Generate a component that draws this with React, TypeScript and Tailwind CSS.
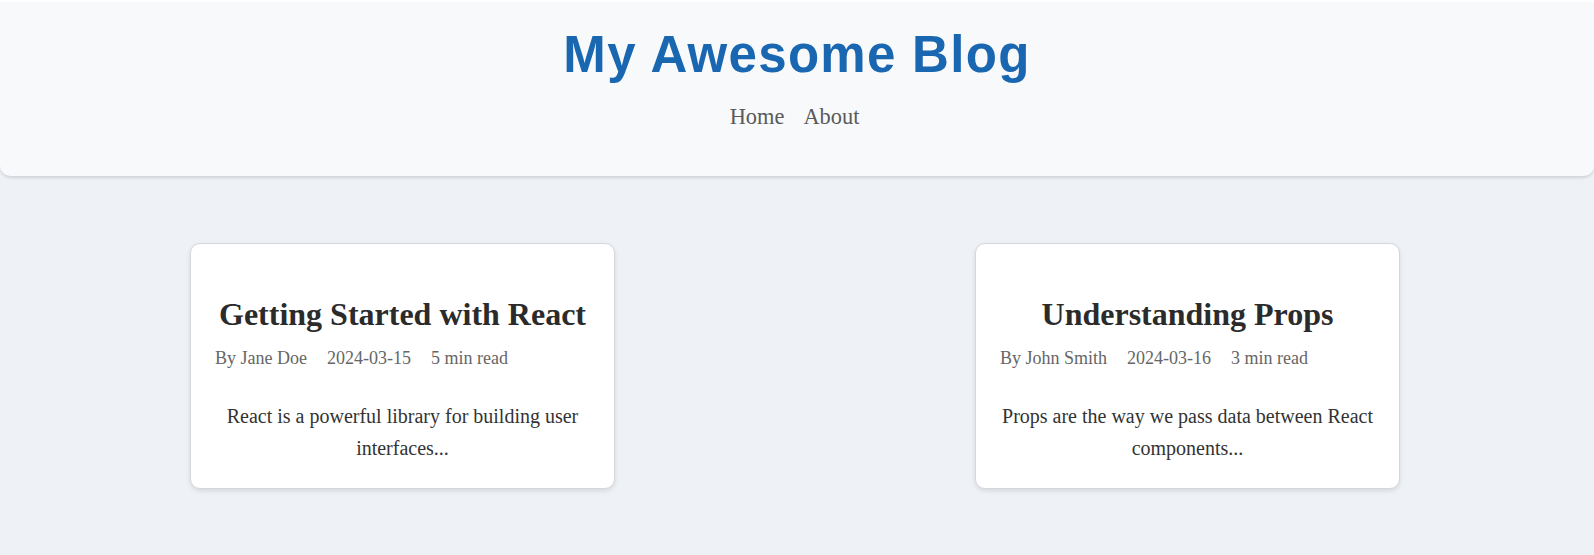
const posts = [
  {
    title: "Getting Started with React",
    author: "Jane Doe",
    date: "2024-03-15",
    read: "5 min read",
    excerpt: "React is a powerful library for building user interfaces...",
  },
  {
    title: "Understanding Props",
    author: "John Smith",
    date: "2024-03-16",
    read: "3 min read",
    excerpt: "Props are the way we pass data between React components...",
  },
];

function PostCard({ post }: { post: (typeof posts)[number] }) {
  return (
    <article className="w-[425px] bg-white border border-[#d4d7dc] rounded-[10px] shadow-[0_2px_5px_rgba(0,0,0,0.1)] px-6 pt-[52px] pb-6">
      <h2 className="text-center text-[32px] leading-[1.15] font-bold text-[#2b2b2b]">
        {post.title}
      </h2>
      <div className="mt-[15px] flex gap-5 text-[18px] leading-[1.15] text-[#666]">
        <span>By {post.author}</span>
        <span>{post.date}</span>
        <span>{post.read}</span>
      </div>
      <p className="mt-[31px] text-center text-[20px] leading-[32px] text-[#333]">
        {post.excerpt}
      </p>
    </article>
  );
}

export default function App() {
  return (
    <div className="min-h-screen bg-[#eef1f5] font-['Liberation_Serif',serif]">
      <header className="bg-[#f8f9fa] border-t-2 border-white rounded-b-[10px] shadow-[0_2px_3px_rgba(0,0,0,0.12)] pt-[24px] pb-[47px] text-center">
        <h1 className="font-['Liberation_Sans',Arial,sans-serif] text-[51px] leading-[1.15] font-bold tracking-[1.3px] text-[#1a67b1]">
          My Awesome Blog
        </h1>
        <nav className="mt-5 pr-[5px] flex justify-center gap-[19px] text-[22.4px] leading-[1.1] text-[#5a5a5a]">
          <a href="#">Home</a>
          <a href="#">About</a>
        </nav>
      </header>
      <main className="flex justify-between pl-[190px] pr-[194px] pt-[67px] pb-10">
        {posts.map((p) => (
          <PostCard key={p.title} post={p} />
        ))}
      </main>
    </div>
  );
}
